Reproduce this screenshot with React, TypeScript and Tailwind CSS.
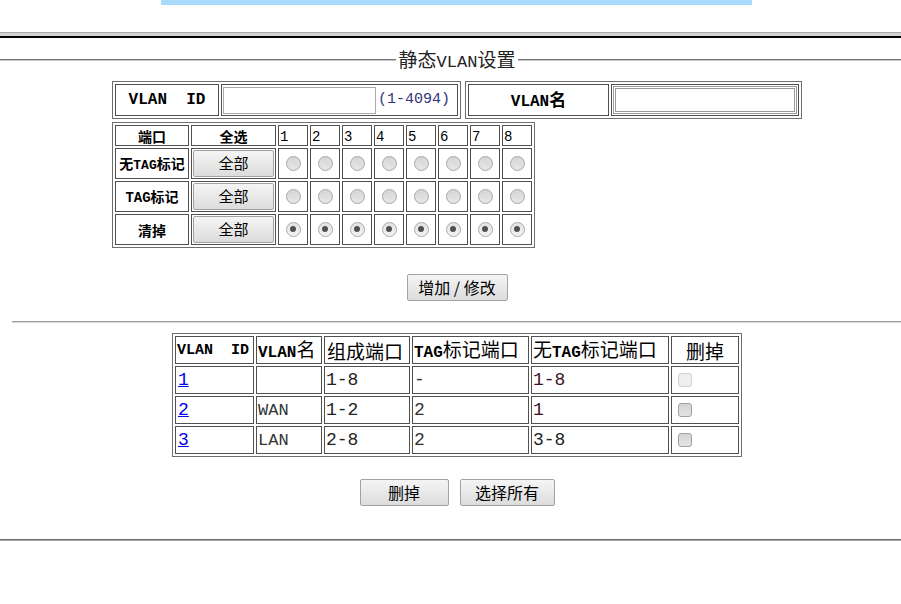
import React from "react";

const cellB = "border border-[#505050]";
const outerB = "border border-[#6e6e6e]";

function L({ children, className = "" }: { children: React.ReactNode; className?: string }) {
  return <span className={"[font-family:'Liberation_Mono',monospace] " + className}>{children}</span>;
}

function Btn({ children, className = "" }: { children: React.ReactNode; className?: string }) {
  return (
    <div
      className={
        "flex items-center justify-center rounded-[2px] border border-[#a2a2a2] bg-linear-to-b from-[#f5f5f5] to-[#dcdcdc] text-[15px] leading-none text-black pb-[2px] " +
        className
      }
    >
      {children}
    </div>
  );
}

function Radio({ checked }: { checked?: boolean }) {
  return (
    <span
      className={
        "flex h-[15px] w-[15px] items-center justify-center rounded-full border border-[#a6a6a6] " +
        (checked ? "bg-linear-to-b from-[#e4e4e4] to-[#f2f2f2]" : "bg-linear-to-b from-[#d6d6d6] to-[#e6e6e6]")
      }
    >
      {checked && <span className="h-[6px] w-[6px] rounded-full bg-[#4f4f4f]" />}
    </span>
  );
}

function Check({ disabled }: { disabled?: boolean }) {
  return (
    <span
      className={
        "block h-[14px] w-[14px] rounded-[3px] border " +
        (disabled
          ? "border-[#d2d2d2] bg-[#efefef]"
          : "border-[#a0a0a0] bg-linear-to-b from-[#d4d4d4] to-[#e4e4e4]")
      }
    />
  );
}

const rows = [
  { label: "无TAG标记", checked: false },
  { label: "TAG标记", checked: false },
  { label: "清掉", checked: true },
];

const vlans = [
  { id: "1", name: "", members: "1-8", tag: "-", untag: "1-8", untagColor: "text-[#3d1028]", disabled: true },
  { id: "2", name: "WAN", members: "1-2", tag: "2", untag: "1", untagColor: "text-[#3d1028]", disabled: false },
  { id: "3", name: "LAN", members: "2-8", tag: "2", untag: "3-8", untagColor: "text-[#222]", disabled: false },
];

export default function App() {
  return (
    <div className="h-[604px] w-[901px] overflow-hidden bg-white text-black [font-family:'Noto_Sans_CJK_SC',sans-serif]">
      <div className="w-[914px]">
        <div className="ml-[161px] h-[5px] w-[591px] bg-[#aadafc]" />
        <div className="mt-[27px] h-[4px] border-t border-[#a8a8a8] bg-[#d3d3d3]" />
        <div className="h-[2px] bg-black" />

        {/* legend */}
        <div className="mt-[11px] flex h-[22px] items-center">
          <div className="h-[2px] flex-1 border-t border-[#777] bg-[#c4c4c4]" />
          <div className="px-[3px] text-[19px] leading-none text-[#222]">
            <span>
              静态<L className="text-[17px]">VLAN</L>设置
            </span>
          </div>
          <div className="h-[2px] flex-1 border-t border-[#777] bg-[#c4c4c4]" />
        </div>

        {/* top tables */}
        <div className="mx-auto mt-[10px] w-[690px]">
          <div className="flex gap-[4px]">
            <div className={outerB + " flex gap-[2px] p-[2px]"}>
              <div className={cellB + " flex h-[32px] w-[104px] items-center justify-center"}>
                <L className="whitespace-pre text-[16px] font-bold">VLAN  ID</L>
              </div>
              <div className={cellB + " flex h-[32px] w-[237px] items-center pl-[1px]"}>
                <div className="h-[27px] w-[153px] border border-[#a9a9a9] bg-white" />
                <L className="ml-[2px] text-[15px] text-[#33337a]">(1-4094)</L>
              </div>
            </div>
            <div className={outerB + " flex gap-[2px] p-[2px]"}>
              <div className={cellB + " flex h-[32px] w-[141px] items-center justify-center"}>
                <span className="font-bold leading-none">
                  <L className="text-[16px]">VLAN</L>
                  <span className="text-[17px]">名</span>
                </span>
              </div>
              <div className={cellB + " h-[32px] w-[188px] p-[1px]"}>
                <div className="h-full w-full border-[3px] border-double border-[#9a9a9a] bg-white" />
              </div>
            </div>
          </div>

          {/* port table */}
          <div className={outerB + " mt-[3px] w-fit p-[2px]"}>
            <div className="grid grid-cols-[74px_85px_repeat(8,30px)] grid-rows-[21px_31px_31px_31px] gap-[2px]">
              <div className={cellB + " flex items-center justify-center text-[14px] font-bold leading-none"}>端口</div>
              <div className={cellB + " flex items-center justify-center text-[14px] font-bold leading-none"}>全选</div>
              {[1, 2, 3, 4, 5, 6, 7, 8].map((n) => (
                <div key={n} className={cellB + " flex items-center pl-[1px] pt-[2px]"}>
                  <L className="text-[14px] leading-none">{n}</L>
                </div>
              ))}
              {rows.map((r) => (
                <React.Fragment key={r.label}>
                  <div className={cellB + " flex items-center justify-center text-[14px] font-bold leading-none"}>
                    {r.label === "清掉" ? (
                      <span>清掉</span>
                    ) : r.label === "TAG标记" ? (
                      <span>
                        <L className="text-[14px]">TAG</L>标记
                      </span>
                    ) : (
                      <span>
                        无<L className="text-[13px]">TAG</L>标记
                      </span>
                    )}
                  </div>
                  <div className={cellB + " p-[1px]"}>
                    <Btn className="h-full w-full">全部</Btn>
                  </div>
                  {[1, 2, 3, 4, 5, 6, 7, 8].map((n) => (
                    <div key={n} className={cellB + " flex items-center justify-center pb-[1px]"}>
                      <Radio checked={r.checked} />
                    </div>
                  ))}
                </React.Fragment>
              ))}
            </div>
          </div>
        </div>

        {/* add/modify */}
        <Btn className="mx-auto mt-[26px] h-[27px] w-[101px] text-[16px] whitespace-pre">增加 / 修改</Btn>

        <div className="mx-[12px] mt-[20px] h-[2px] border-t border-[#9c9c9c] bg-[#dadada]" />

        {/* vlan list */}
        <div className={outerB + " mx-auto mt-[10px] w-fit p-[2px]"}>
          <div className="grid grid-cols-[79px_66px_86px_117px_138px_68px] grid-rows-[28px_28px_28px_28px] gap-[2px]">
            <div className={cellB + " flex items-center pl-[1px] leading-none"}>
              <L className="whitespace-pre text-[15px] font-bold">VLAN  ID</L>
            </div>
            <div className={cellB + " flex items-center pl-[1px] leading-none"}>
              <span>
                <L className="text-[16px] font-bold">VLAN</L>
                <span className="text-[19px]">名</span>
              </span>
            </div>
            <div className={cellB + " flex items-center pl-[2px] text-[19px] leading-none"}>
              <span>组成端口</span>
            </div>
            <div className={cellB + " flex items-center pl-[1px] text-[19px] leading-none"}>
              <span>
                <L className="text-[16px] font-bold">TAG</L>标记端口
              </span>
            </div>
            <div className={cellB + " flex items-center pl-[1px] text-[19px] leading-none"}>
              <span>
                无<L className="text-[16px] font-bold">TAG</L>标记端口
              </span>
            </div>
            <div className={cellB + " flex items-center justify-center text-[19px] leading-none"}>
              <span>删掉</span>
            </div>

            {vlans.map((v) => (
              <React.Fragment key={v.id}>
                <div className={cellB + " flex items-center pl-[2px] leading-none"}>
                  <L className="text-[18px] text-[#0000ee] underline">{v.id}</L>
                </div>
                <div className={cellB + " flex items-center pl-[1px] leading-none"}>
                  <L className="text-[17px] text-[#333]">{v.name}</L>
                </div>
                <div className={cellB + " flex items-center pl-[1px] leading-none"}>
                  <L className="text-[18px] text-[#222]">{v.members}</L>
                </div>
                <div className={cellB + " flex items-center pl-[1px] leading-none"}>
                  <L className="text-[18px] text-[#333]">{v.tag}</L>
                </div>
                <div className={cellB + " flex items-center pl-[1px] leading-none"}>
                  <L className={"text-[18px] " + v.untagColor}>{v.untag}</L>
                </div>
                <div className={cellB + " flex items-center pl-[6px]"}>
                  <Check disabled={v.disabled} />
                </div>
              </React.Fragment>
            ))}
          </div>
        </div>

        {/* bottom buttons */}
        <div className="mt-[22px] flex justify-center gap-[11px]">
          <Btn className="h-[27px] w-[89px] text-[16px]">删掉</Btn>
          <Btn className="h-[27px] w-[95px] text-[16px]">选择所有</Btn>
        </div>

        <div className="mt-[33px] h-[2px] border-t border-[#6e6e6e] bg-[#a8a8a8]" />
      </div>
    </div>
  );
}
